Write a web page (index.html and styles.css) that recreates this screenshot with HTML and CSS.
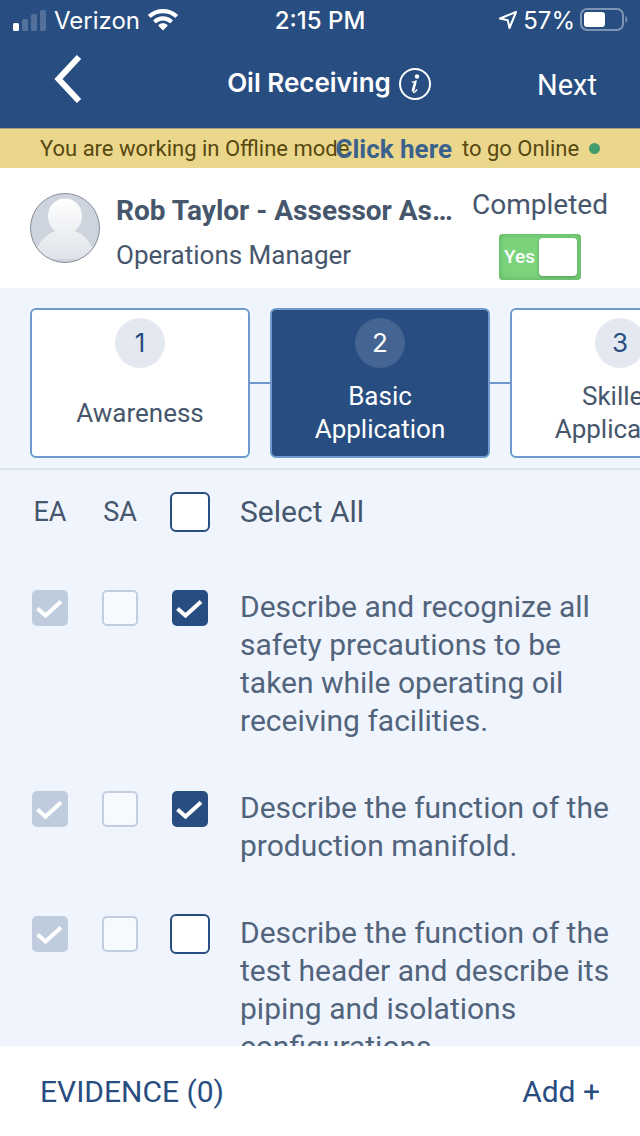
FILE: index.html
```html
<!DOCTYPE html>
<html lang="en">
<head>
    <meta charset="UTF-8">
    <meta name="viewport" content="width=device-width, initial-scale=1">
    <title>Oil Receiving</title>
    <link rel="stylesheet" href="styles.css">
</head>
<body>
    <header class="header">
        <div class="status-bar">
            <div class="status-left">
                <svg class="signal" width="34" height="22" viewBox="0 0 34 22" fill="#fff">
                    <rect x="1" y="14" width="6" height="8" rx="1.5"/>
                    <rect x="10" y="10" width="6" height="12" rx="1.5" opacity=".2"/>
                    <rect x="19" y="5" width="6" height="17" rx="1.5" opacity=".2"/>
                    <rect x="28" y="1" width="6" height="21" rx="1.5" opacity=".2"/>
                </svg>
                <span class="carrier">Verizon</span>
                <svg width="30" height="22" viewBox="0 0 30 22" fill="#fff">
                    <path d="M15 0C9.400 0 4.200 2 0.300 5.600c-.3.300-.3.700 0 1l1.900 2c.3.300.7.300 1 0C6.400 5.700 10.500 4.200 15 4.200s8.600 1.500 11.800 4.400c.3.300.7.300 1 0l1.900-2c.3-.3.300-.7 0-1C25.800 2 20.600 0 15 0z"/>
                    <path d="M15 7.200c-3.600 0-6.900 1.300-9.500 3.700-.3.300-.3.700 0 1l2 2c.3.300.7.300 1 0 1.800-1.600 4.100-2.500 6.500-2.500s4.700.9 6.500 2.500c.3.300.7.300 1 0l2-2c.3-.3.300-.7 0-1-2.600-2.400-5.900-3.700-9.500-3.700z"/>
                    <path d="M15 14.300c-1.700 0-3.200.6-4.400 1.700-.3.300-.3.600 0 .9l3.900 4.200c.3.300.7.300 1 0l3.900-4.200c.3-.3.300-.6 0-.9-1.200-1.100-2.700-1.700-4.400-1.700z"/>
                </svg>
            </div>
            <div class="clock">2:15 PM</div>
            <div class="status-right">
                <svg width="20" height="20" viewBox="0 0 20 20" fill="none" stroke="#fff" stroke-width="2" stroke-linejoin="round">
                    <path d="M18 2L2 8.500l7.800 1.700L11.500 18z"/>
                </svg>
                <span class="battery-text">57%</span>
                <svg width="48" height="24" viewBox="0 0 48 24">
                    <rect x="1" y="1" width="42" height="21" rx="6" fill="none" stroke="#fff" stroke-width="2" opacity=".4"/>
                    <rect x="4" y="4" width="21" height="15" rx="3" fill="#fff"/>
                    <path d="M45.500 8c2.500 1 2.500 6 0 7z" fill="#fff" opacity=".4"/>
                </svg>
            </div>
        </div>
        <nav class="nav-bar">
            <button class="back-button" aria-label="Back">
                <svg width="28" height="48" viewBox="0 0 28 48" fill="none" stroke="#fff" stroke-width="6">
                    <path d="M25 2L4.500 24L25 46"/>
                </svg>
            </button>
            <div class="nav-title">
                <h1>Oil Receiving</h1>
                <button class="info-button" aria-label="Information">
                    <svg width="32" height="32" viewBox="0 0 32 32" fill="none" stroke="#fff">
                        <circle cx="16" cy="16" r="15" stroke-width="2"/>
                        <circle cx="18" cy="8.500" r="2.200" fill="#fff" stroke="none"/>
                        <path d="M12.700 14.200c1.500 0 3-.4 4.200-1l-2.600 9.300c-.5 2 .4 2.300 1.500 1.500.9-.7 1.600-1.700 2.200-2.700" stroke-width="1.300"/>
                        <path d="M16.300 13.800l-2.500 9.300" stroke-width="2.600"/>
                    </svg>
                </button>
            </div>
            <button class="next-button">Next</button>
        </nav>
    </header>

    <div class="offline-bar">
        <span>You are working in Offline mode</span>
        <a class="online-link" href="#">Click here</a>
        <span>to go Online</span>
        <span class="online-dot"></span>
    </div>

    <section class="profile">
        <svg class="avatar" width="70" height="70" viewBox="0 0 70 70">
            <defs>
                <linearGradient id="person" x1="0" y1="0" x2="0" y2="1">
                    <stop offset="0" stop-color="#ffffff"/>
                    <stop offset="1" stop-color="#dfe3e9"/>
                </linearGradient>
                <clipPath id="round"><circle cx="35" cy="35" r="34"/></clipPath>
            </defs>
            <circle cx="35" cy="35" r="34.500" fill="#cdd4de"/>
            <path clip-path="url(#round)" fill="url(#person)" d="M35 5.500c-9.500 0-17 7.500-17 17.500 0 6.500 3 12 7.500 15C17 41 11 47 8 54v12h54V54c-3-7-9-13-17.500-16 4.500-3 7.500-8.500 7.500-15 0-10-7.500-17.500-17-17.500z"/>
            <circle cx="35" cy="35" r="34.500" fill="none" stroke="#858d9a"/>
        </svg>
        <div class="person">
            <h2>Rob Taylor - Assessor Assessor</h2>
            <p>Operations Manager</p>
        </div>
        <div class="completed">
            <label for="completed">Completed</label>
            <div class="toggle">
                <input type="checkbox" role="switch" id="completed" checked>
                <span class="toggle-text">Yes</span>
            </div>
        </div>
    </section>

    <section class="steps">
        <button class="step">
            <span class="step-number">1</span>
            <span class="step-name">Awareness</span>
        </button>
        <span class="step-line"></span>
        <button class="step active">
            <span class="step-number">2</span>
            <span class="step-name">Basic Application</span>
        </button>
        <span class="step-line"></span>
        <button class="step">
            <span class="step-number">3</span>
            <span class="step-name">Skilled Application</span>
        </button>
    </section>

    <main class="tasks">
        <div class="task-row head-row">
            <span class="col-name">EA</span>
            <span class="col-name">SA</span>
            <input type="checkbox" class="check" id="select-all">
            <label for="select-all">Select All</label>
        </div>
        <div class="task-row">
            <input type="checkbox" class="check" aria-label="EA" checked disabled>
            <input type="checkbox" class="check" aria-label="SA" disabled>
            <input type="checkbox" class="check" id="task1" checked>
            <label for="task1">Describe and recognize all safety precautions to be taken while operating oil receiving facilities.</label>
        </div>
        <div class="task-row">
            <input type="checkbox" class="check" aria-label="EA" checked disabled>
            <input type="checkbox" class="check" aria-label="SA" disabled>
            <input type="checkbox" class="check" id="task2" checked>
            <label for="task2">Describe the function of the production manifold.</label>
        </div>
        <div class="task-row">
            <input type="checkbox" class="check" aria-label="EA" checked disabled>
            <input type="checkbox" class="check" aria-label="SA" disabled>
            <input type="checkbox" class="check" id="task3">
            <label for="task3">Describe the function of the test header and describe its piping and isolations configurations.</label>
        </div>
    </main>

    <footer class="footer">
        <button>EVIDENCE (0)</button>
        <button>Add +</button>
    </footer>
</body>
</html>
```

FILE: styles.css
```css
* {
    box-sizing: border-box;
}
body {
    margin: 0;
    height: 100vh;
    display: flex;
    flex-direction: column;
    overflow: hidden;
    font-family: Roboto, "Liberation Sans", sans-serif;
    color: #46566c;
    background: #f0f5fd;
}
h1, h2, p {
    margin: 0;
}
button {
    padding: 0;
    border: 0;
    background: none;
    font-family: inherit;
    color: inherit;
    cursor: pointer;
}
svg {
    display: block;
    flex: none;
}

/* header */
.header {
    flex: none;
    height: 128px;
    background: #284d81;
    color: #fff;
}
.status-bar {
    height: 40px;
    padding: 0 12px;
    display: grid;
    grid-template-columns: 1fr auto 1fr;
    align-items: center;
    font-family: Inter, sans-serif;
    font-size: 24px;
}
.status-left, .status-right {
    display: flex;
    align-items: center;
    gap: 8px;
}
.status-right {
    justify-content: flex-end;
    gap: 5px;
}
.clock {
    font-weight: 500;
}
.nav-bar {
    height: 88px;
    padding: 0 36px 0 54px;
    display: grid;
    grid-template-columns: 1fr auto 1fr;
    align-items: center;
}
.back-button {
    justify-self: start;
    padding-bottom: 10px;
}
.nav-title {
    display: flex;
    align-items: center;
    gap: 8px;
}
h1 {
    padding-bottom: 3px;
    font-family: Inter, sans-serif;
    font-size: 26px;
    font-weight: 600;
}
.next-button {
    justify-self: end;
    padding: 2px 7px 0 0;
    font-size: 29px;
}

/* offline message */
.offline-bar {
    flex: none;
    height: 40px;
    padding: 0 40px;
    display: flex;
    align-items: center;
    border-top: 1px solid #a9a079;
    background: #ebd78c;
    color: #57480f;
    font-size: 22px;
    white-space: nowrap;
}
.online-link {
    margin: 0 10px 0 -14px;
    color: #3a628c;
    font-size: 26px;
    font-weight: 700;
    text-decoration: none;
}
.online-dot {
    flex: none;
    width: 11px;
    height: 11px;
    margin-left: 10px;
    border-radius: 50%;
    background: #449b6c;
}

/* profile */
.profile {
    flex: none;
    height: 120px;
    padding: 0 32px 0 30px;
    display: flex;
    align-items: center;
    background: #fff;
}
.person {
    flex: 1;
    min-width: 0;
    margin: 0 16px;
    padding-top: 10px;
}
h2 {
    overflow: hidden;
    text-overflow: ellipsis;
    white-space: nowrap;
    font-size: 28px;
    line-height: 44px;
}
.person p {
    font-size: 26px;
    line-height: 44px;
}
.completed {
    display: flex;
    flex-direction: column;
    align-items: center;
    gap: 13px;
    padding-top: 13px;
    font-size: 28px;
    line-height: 32px;
}
.toggle {
    display: grid;
    align-items: center;
}
.toggle > * {
    grid-area: 1 / 1;
}
.toggle input {
    appearance: none;
    width: 82px;
    height: 46px;
    margin: 0;
    padding: 4px;
    display: flex;
    border-radius: 4px;
    background: #7bd37b;
    box-shadow: inset 0 0 6px #5fae62;
}
.toggle input::before {
    content: "";
    width: 38px;
    border-radius: 4px;
    background: #fff;
    box-shadow: 0 1px 3px #4f9a55;
}
.toggle input:checked {
    justify-content: flex-end;
}
.toggle-text {
    padding-left: 5px;
    color: #fff;
    font-size: 19px;
    font-weight: 500;
    pointer-events: none;
}

/* steps */
.steps {
    flex: none;
    height: 182px;
    padding: 20px 30px 10px;
    display: flex;
    overflow: hidden;
    border-bottom: 2px solid #dce3ed;
}
.step {
    flex: none;
    width: 220px;
    padding: 8px 20px 10px;
    display: flex;
    flex-direction: column;
    align-items: center;
    border: 2px solid #6f9acb;
    border-radius: 6px;
    background: #fff;
    font-size: 26px;
    line-height: 33px;
}
.step-line {
    flex: none;
    align-self: center;
    width: 20px;
    height: 2px;
    background: #6f9acb;
}
.step-number {
    flex: none;
    width: 50px;
    height: 50px;
    border-radius: 50%;
    background: #e4e9f1;
    color: #284d81;
    font-family: Inter, sans-serif;
    line-height: 50px;
}
.step-name {
    flex: 1;
    display: flex;
    align-items: center;
    padding-top: 12px;
}
.step.active {
    background: #284d81;
    color: #fff;
}
.active .step-number {
    background: #446591;
    color: #fff;
}

/* task list */
.tasks {
    flex: 1;
    min-height: 0;
    padding: 22px 30px 0;
    overflow-y: auto;
    scrollbar-width: none;
}
.task-row {
    display: grid;
    grid-template-columns: 40px 40px 40px 1fr;
    column-gap: 30px;
    align-items: start;
    margin-bottom: 49px;
    font-size: 30px;
    line-height: 38px;
    color: #52647c;
}
.head-row {
    align-items: center;
    margin-bottom: 56px;
    line-height: 40px;
    color: #46566c;
}
.col-name {
    text-align: center;
    font-size: 27px;
}
.check {
    appearance: none;
    width: 40px;
    height: 40px;
    margin: 0;
    border: 2px solid #284d81;
    border-radius: 6px;
    background: #fff;
}
.check:checked, .check:disabled {
    width: 36px;
    height: 36px;
    margin: 2px;
    border-radius: 5px;
}
.check:checked {
    border: 0;
    background: #284d81 url("data:image/svg+xml,%3Csvg xmlns='http://www.w3.org/2000/svg' viewBox='0 0 36 36' fill='none' stroke='white' stroke-width='4'%3E%3Cpath d='M5.500 18.500l8 7L29 11.500'/%3E%3C/svg%3E");
}
.check:disabled {
    border-color: #c3cde0;
    background-color: #f6f9fe;
}
.check:checked:disabled {
    background-color: #bfccde;
}

/* footer */
.footer {
    flex: none;
    height: 90px;
    padding: 0 40px;
    display: flex;
    align-items: center;
    justify-content: space-between;
    background: #fff;
    color: #284d81;
}
.footer button {
    font-size: 30px;
}
```
